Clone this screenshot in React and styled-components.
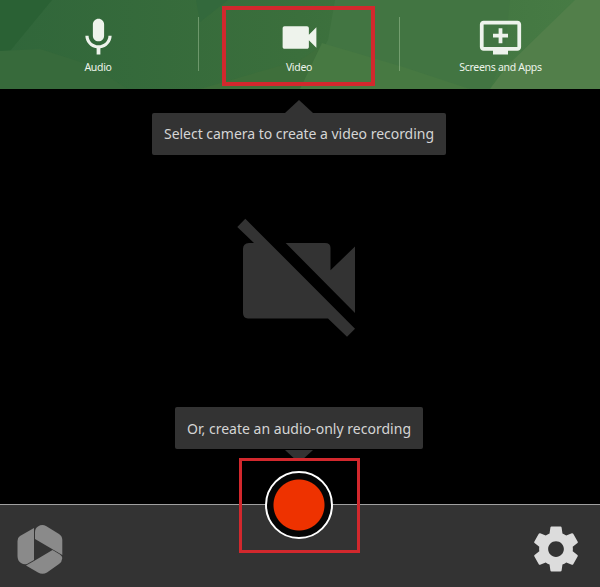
import React from "react";
import styled, { createGlobalStyle } from "styled-components";

const GlobalStyle = createGlobalStyle`
  *, *::before, *::after { box-sizing: border-box; }
  body { margin: 0; background: #000; font-family: "Noto Sans", "Open Sans", sans-serif; }
`;

const Recorder = styled.div`
  display: flex;
  flex-direction: column;
  width: 600px;
  height: 587px;
  overflow: hidden;
  background: #000;
`;

const Header = styled.header`
  position: relative;
  display: grid;
  grid-template-columns: 198px 201px 201px;
  height: 89px;
  flex: none;
  background: #336a3a;
`;

const Backdrop = styled.svg`
  position: absolute;
  inset: 0;
`;

const SourceTab = styled.button`
  position: relative;
  display: flex;
  flex-direction: column;
  align-items: center;
  padding: 15px ${(p) => p.$right || 0}px 0 ${(p) => p.$left || 0}px;
  border: 0;
  background: none;
  color: #edf4ea;
  font: 10.5px/16px "Noto Sans", "Open Sans", sans-serif;
  letter-spacing: -0.3px;

  &:not(:first-of-type)::before {
    content: "";
    position: absolute;
    left: 0;
    top: 17px;
    width: 1px;
    height: 54px;
    background: rgba(190, 220, 180, 0.4);
  }
`;

const TabIcon = styled.svg`
  display: block;
  width: 45px;
  height: 45px;
  margin-bottom: -1px;
  fill: #eef3ec;
`;

const Highlight = styled.div`
  position: absolute;
  z-index: 3;
  left: ${(p) => p.$x}px;
  top: ${(p) => p.$y}px;
  width: ${(p) => p.$w}px;
  height: ${(p) => p.$h}px;
  border: ${(p) => p.$stroke}px solid #d2282d;
  pointer-events: none;
`;

const Preview = styled.main`
  display: flex;
  flex-direction: column;
  align-items: center;
  height: 415px;
  flex: none;
  padding-top: 24px;
`;

const Tooltip = styled.div`
  position: relative;
  display: flex;
  align-items: center;
  justify-content: center;
  width: ${(p) => p.$width}px;
  height: 42px;
  margin-right: 2px;
  padding-bottom: ${(p) => (p.$arrow === "up" ? 1 : 0)}px;
  border-radius: 2px;
  background: #333;
  color: #d5d5d5;
  font-size: 14px;
  letter-spacing: ${(p) => p.$tracking}px;
  white-space: nowrap;

  &::after {
    content: "";
    position: absolute;
    left: calc(50% - 14px);
    width: 28px;
    background: #333;
    ${(p) =>
      p.$arrow === "up"
        ? "top: -13px; height: 13px; clip-path: polygon(50% 0, 100% 100%, 0 100%);"
        : "bottom: -10px; height: 9px; clip-path: polygon(0 0, 100% 0, 65% 100%, 35% 100%);"}
  }
`;

const CameraOff = styled.svg`
  display: block;
  width: 120px;
  height: 120px;
  margin: 63px 6px 69px 0;
  fill: #333;
`;

const Footer = styled.footer`
  position: relative;
  display: flex;
  align-items: center;
  justify-content: space-between;
  height: 83px;
  flex: none;
  padding: 5px 17px 0 15px;
  border-top: 1px solid #a0a0a0;
  background: #333;
`;

const RecordButton = styled.button`
  position: absolute;
  left: 265px;
  top: -34px;
  width: 68px;
  height: 68px;
  padding: 0;
  border: 2px solid #fff;
  border-radius: 50%;
  background: radial-gradient(circle, #ee3200 25px, #050505 26px);
`;

const Logo = styled.svg`
  width: 50px;
  height: 54px;
  fill: #8a8a8a;
`;

const Gear = styled.svg`
  width: 54px;
  height: 54px;
  fill: #dcdcdc;
`;

export default function App() {
  return (
    <>
      <GlobalStyle />
      <Recorder>
        <Header>
          <Backdrop width="600" height="89" viewBox="0 0 600 89" aria-hidden="true">
            <defs>
              <linearGradient id="base">
                <stop offset="0" stopColor="#30663a" />
                <stop offset="0.5" stopColor="#3b6f3c" />
                <stop offset="1" stopColor="#487c45" />
              </linearGradient>
            </defs>
            <rect width="600" height="89" fill="url(#base)" />
            <path d="M0 0H52L10 51H0z" fill="#2a6134" />
            <path d="M0 51L40 49L90 65L128 89H0z" fill="#376a3b" />
            <path d="M200 33L148 89H200L300 60L320 47L300 89H148z" fill="#3e6f3b" />
            <path d="M196 0H228L200 22z" fill="#33693c" />
            <path d="M335 0H510L505 50L490 89H300L328 40z" fill="#427542" />
            <path d="M322 43L400 66L470 89H300z" fill="#477942" />
            <path d="M575 0H600V89H490L507 66z" fill="#527f4a" />
          </Backdrop>
          <SourceTab $right={2}>
            <TabIcon viewBox="0 0 24 24">
              <path d="M12 14c1.66 0 2.99-1.34 2.99-3L15 5c0-1.66-1.34-3-3-3S9 3.34 9 5v6c0 1.66 1.34 3 3 3zm5.3-3c0 3-2.54 5.1-5.3 5.1S6.700 14 6.700 11H5c0 3.410 2.720 6.230 6 6.720V21h2v-3.280c3.280-.480 6-3.300 6-6.720h-1.700z" />
            </TabIcon>
            Audio
          </SourceTab>
          <SourceTab $left={1}>
            <TabIcon viewBox="0 0 24 24">
              <path d="M17 10.500V7c0-.550-.450-1-1-1H4c-.550 0-1 .450-1 1v10c0 .550.450 1 1 1h12c.550 0 1-.450 1-1v-3.500l4 4v-11l-4 4z" />
            </TabIcon>
            Video
          </SourceTab>
          <SourceTab $left={2}>
            <TabIcon viewBox="0 0 24 24">
              <path d="M21 3H3c-1.110 0-2 .890-2 2v12c0 1.100.890 2 2 2h5v2h8v-2h5c1.100 0 1.990-.900 1.990-2L23 5c0-1.110-.900-2-2-2zm0 14H3V5h18v12zm-5-7v2h-3v3h-2v-3H8v-2h3V7h2v3h3z" />
            </TabIcon>
            Screens and Apps
          </SourceTab>
          <Highlight $x={222} $y={6} $w={153} $h={80} $stroke={4} />
        </Header>
        <Preview>
          <Tooltip $width={294} $arrow="up" $tracking={-0.03}>
            Select camera to create a video recording
          </Tooltip>
          <CameraOff viewBox="237 218 120 120">
            <path d="M245.300 218.700L355 328.700L347 336.700L328 318.500H248Q243 318 243 313V249Q243 243.500 249 243H254L237.300 227z" />
            <path d="M285.700 243H325Q330.500 243 330.500 248V270.300L355 246.500V313z" />
          </CameraOff>
          <Tooltip $width={248} $arrow="down" $tracking={0.02}>
            Or, create an audio-only recording
          </Tooltip>
        </Preview>
        <Footer>
          <Logo viewBox="15 522 50 54">
            <path d="M34 528V560L27 564Q24 565 21 563Q17.500 561 17.500 556V541Q17.500 537.500 20 536z" />
            <path d="M35 539V532Q35 528 38 526.500Q42 524 46 526L59 534Q62.300 536 62.300 540V555z" />
            <path d="M52.500 550L60 554.500Q62.300 556 62.300 558Q62 562 59 564L47 572.500Q42.500 575 38 572.500L26 565.500L34 561z" />
          </Logo>
          <RecordButton aria-label="Record" />
          <Gear viewBox="0 0 24 24">
            <path d="M19.430 12.980c.040-.320.070-.640.070-.980s-.030-.660-.070-.980l2.110-1.650c.190-.150.240-.420.120-.640l-2-3.460c-.120-.220-.390-.300-.610-.220l-2.490 1c-.520-.400-1.080-.730-1.690-.980l-.380-2.650C14.460 2.180 14.250 2 14 2h-4c-.250 0-.460.180-.490.420l-.380 2.650c-.610.250-1.170.590-1.690.980l-2.490-1c-.230-.090-.490 0-.610.220l-2 3.460c-.130.220-.070.490.120.640l2.110 1.650c-.040.320-.070.650-.070.980s.030.660.070.980l-2.110 1.650c-.190.150-.240.420-.120.640l2 3.460c.120.220.390.300.610.220l2.490-1c.520.400 1.080.730 1.690.980l.380 2.650c.030.240.240.420.490.420h4c.250 0 .460-.180.490-.420l.380-2.650c.610-.250 1.170-.590 1.690-.980l2.490 1c.230.090.490 0 .610-.220l2-3.460c.120-.220.070-.490-.120-.640l-2.110-1.650zM12 15.500c-1.930 0-3.500-1.570-3.500-3.500s1.570-3.500 3.500-3.500 3.500 1.570 3.500 3.500-1.570 3.500-3.500 3.500z" />
          </Gear>
          <Highlight $x={239} $y={-47} $w={121} $h={95} $stroke={3} />
        </Footer>
      </Recorder>
    </>
  );
}
